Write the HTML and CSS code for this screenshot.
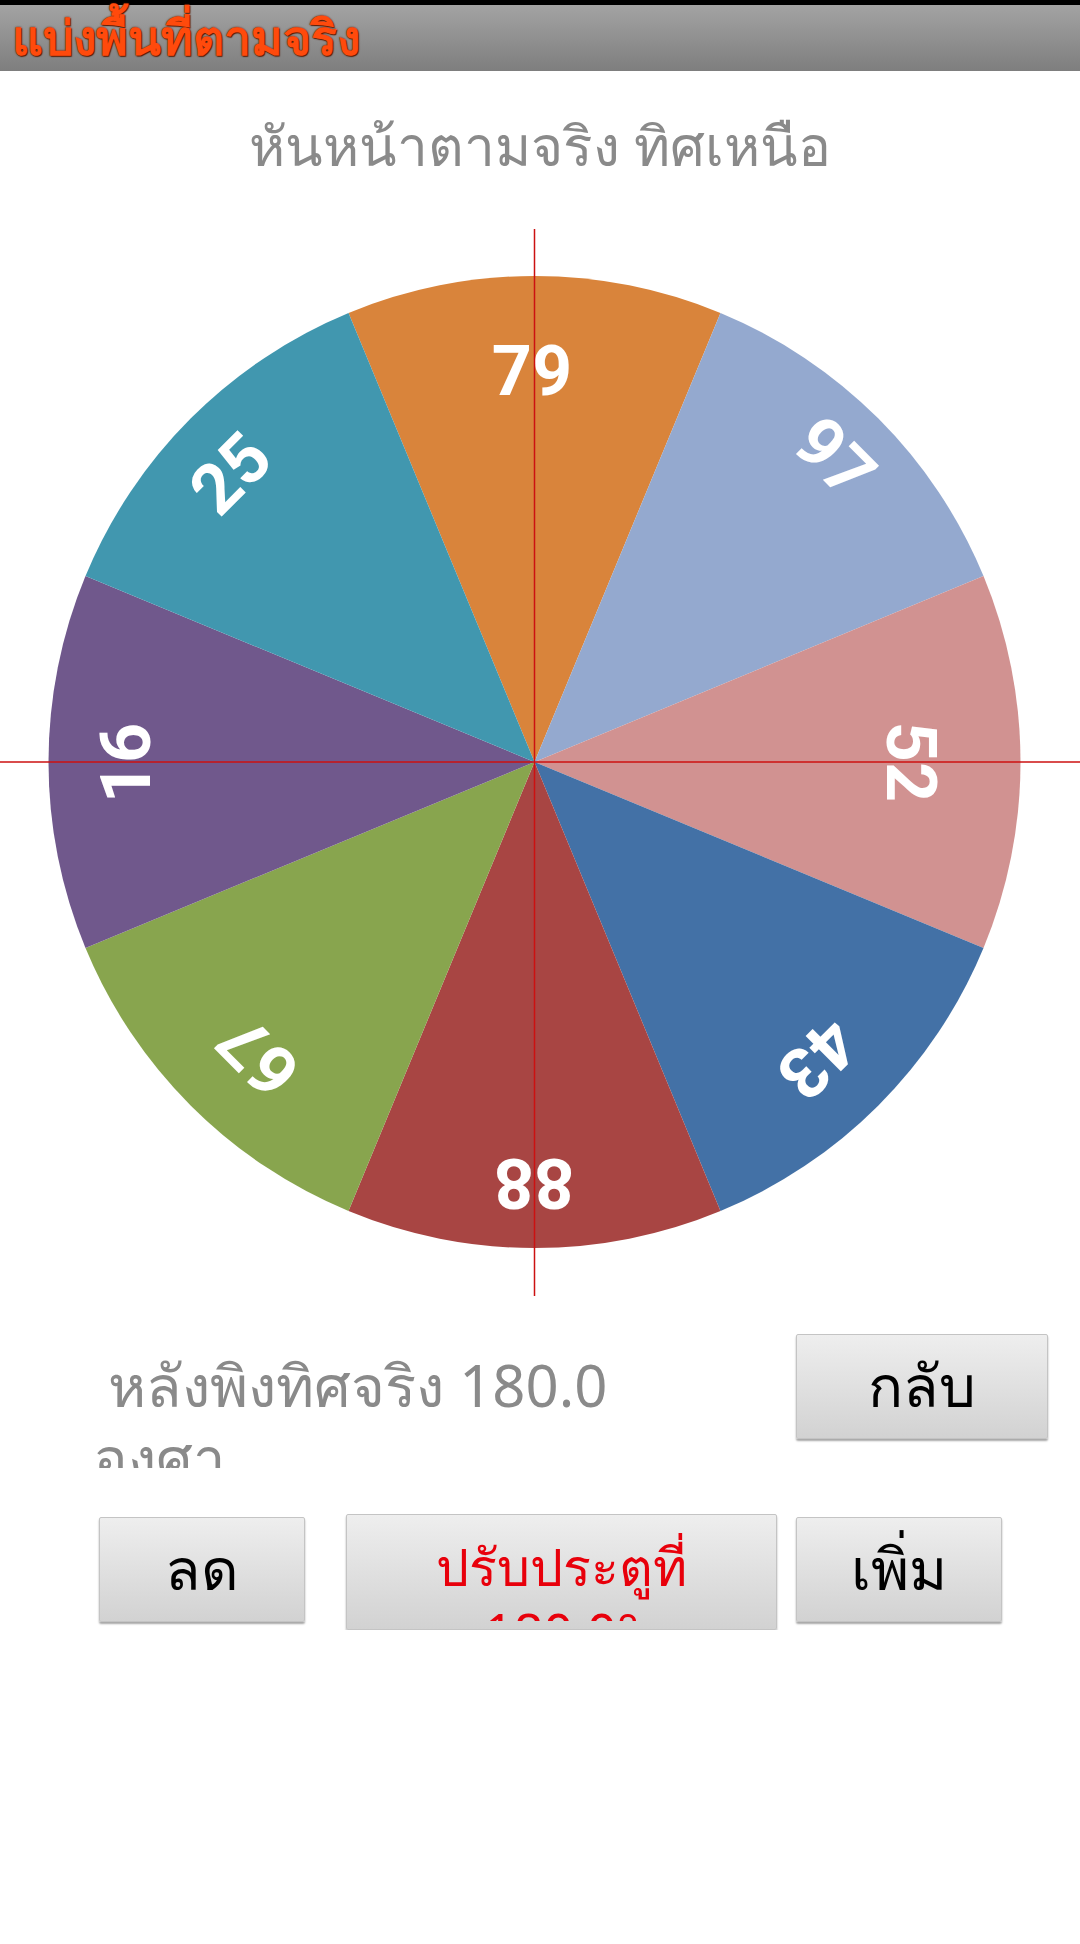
FILE: index.html
```html
<!DOCTYPE html>
<html lang="th">

<head>
  <meta charset="UTF-8">
  <meta name="viewport" content="width=device-width, initial-scale=1.0">
  <title>แบ่งพื้นที่ตามจริง</title>
  <link rel="stylesheet" href="styles.css">
</head>

<body>
  <div class="status"></div>
  <div class="header">
    <h1>แบ่งพื้นที่ตามจริง</h1>
  </div>

  <p class="heading">หันหน้าตามจริง ทิศเหนือ</p>

  <svg class="chart" width="1080" height="1080" viewBox="0 0 1080 1080">
    <path d="M534.5 546 L348.52 96.99 A486 486 0 0 1 720.48 96.99 Z" fill="#d9843b" />
    <path d="M534.5 546 L720.48 96.99 A486 486 0 0 1 983.51 360.02 Z" fill="#94a9cf" />
    <path d="M534.5 546 L983.51 360.02 A486 486 0 0 1 983.51 731.98 Z" fill="#d19291" />
    <path d="M534.5 546 L983.51 731.98 A486 486 0 0 1 720.48 995.01 Z" fill="#4371a6" />
    <path d="M534.5 546 L720.48 995.01 A486 486 0 0 1 348.52 995.01 Z" fill="#a84543" />
    <path d="M534.5 546 L348.52 995.01 A486 486 0 0 1 85.49 731.98 Z" fill="#88a54e" />
    <path d="M534.5 546 L85.49 731.98 A486 486 0 0 1 85.49 360.02 Z" fill="#70588c" />
    <path d="M534.5 546 L85.49 360.02 A486 486 0 0 1 348.52 96.99 Z" fill="#4197af" />

    <!-- labels -->
    <g class="labels">
      <text transform="translate(532 154) rotate(0)" dy=".355em">79</text>
      <text transform="translate(835 241) rotate(45)" dy=".355em">97</text>
      <text transform="translate(912 546) rotate(90)" dy=".355em">52</text>
      <text transform="translate(818 843) rotate(135)" dy=".355em">43</text>
      <text transform="translate(534 968) rotate(180)" dy=".355em">88</text>
      <text transform="translate(258 841) rotate(225)" dy=".355em">67</text>
      <text transform="translate(125 547) rotate(270)" dy=".355em">16</text>
      <text transform="translate(230 257) rotate(315)" dy=".355em">25</text>
    </g>

    <!-- north / south line and east / west line -->
    <line x1="534.5" y1="13" x2="534.5" y2="1080" stroke="#cc1111" stroke-width="1.5" />
    <line x1="0" y1="546" x2="1080" y2="546" stroke="#cc1111" stroke-width="1.5" />
  </svg>

  <div class="controls">
    <div class="row">
      <p class="bearing">&nbsp;หลังพิงทิศจริง 180.0 องศา</p>
      <button class="btn btn-back">กลับ</button>
    </div>
    <div class="row row-adjust">
      <button class="btn btn-small">ลด</button>
      <button class="btn btn-door"><span>ปรับประตูที่ 180.0°</span></button>
      <button class="btn btn-small">เพิ่ม</button>
    </div>
  </div>
</body>

</html>
```

FILE: styles.css
```css
body {
  margin: 0;
  background: #ffffff;
  font-family: "Noto Sans", Roboto, sans-serif;
}

.status {
  height: 5px;
  background: #000000;
}

.header {
  height: 66px;
  background: linear-gradient(#a3a3a3, #7e7e7e);
  padding-left: 12px;
  display: flex;
  align-items: center;
}

.header h1 {
  margin: 0;
  color: #ff4a0c;
  font-size: 48px;
  font-weight: bold;
  text-shadow: 0 0 2px #5a1a00, 1px 1px 1px #5a1a00;
}

.heading {
  margin: 0;
  height: 145px;
  padding-top: 42px;
  box-sizing: border-box;
  text-align: center;
  color: #8a8a8a;
  font-size: 55px;
  line-height: 64px;
}

.chart {
  display: block;
}

.labels text {
  fill: #ffffff;
  font-family: Roboto, sans-serif;
  font-weight: bold;
  font-size: 70px;
  text-anchor: middle;
}

.controls {
  padding-top: 38px;
}

.row {
  display: flex;
  align-items: flex-start;
}

.bearing {
  margin: 0;
  width: 653px;
  height: 134px;
  overflow: hidden;
  padding: 15px 0 0 93px;
  box-sizing: border-box;
  color: #8a8a8a;
  font-size: 58px;
  line-height: 72px;
}

.btn {
  font-family: "Noto Sans", Roboto, sans-serif;
  background: linear-gradient(#eeeeee, #d2d2d2);
  border: 1px solid #c4c4c4;
  border-radius: 2px;
  box-shadow: 0 2px 2px rgba(0, 0, 0, 0.35);
  color: #000000;
  font-size: 58px;
  padding: 0;
  overflow: hidden;
}

.btn-back {
  width: 252px;
  height: 105px;
  margin-left: auto;
  margin-right: 32px;
}

.row-adjust {
  margin-top: 46px;
  padding-left: 99px;
}

.btn-small {
  width: 206px;
  height: 105px;
  margin-top: 3px;
}

.btn-door {
  width: 431px;
  height: 116px;
  margin: 0 19px 0 41px;
  color: #e8000b;
  font-size: 52px;
  align-self: flex-start;
}

.btn-door span {
  display: block;
  height: 88px;
  margin-top: 10px;
  overflow: hidden;
  line-height: 66px;
  padding: 0 40px;
}
```
